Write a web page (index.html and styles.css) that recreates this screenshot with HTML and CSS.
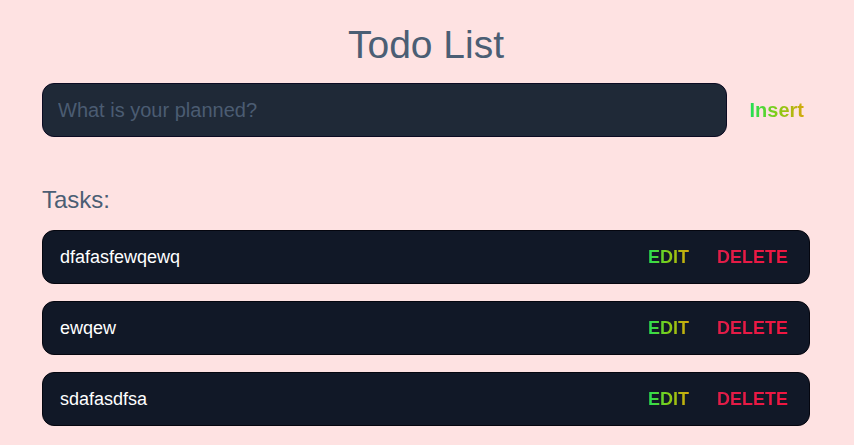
FILE: index.html
```html
<!DOCTYPE html>
<html lang="en">
<head>
<meta charset="utf-8">
<title>Todo List</title>
<link rel="stylesheet" href="styles.css">
</head>
<body>
<main class="app">
  <h1 class="title">Todo List</h1>
  <form class="entry" onsubmit="return false">
    <input class="entry-input" type="text" placeholder="What is your planned?">
    <button class="insert-btn" type="button"><span class="grad-green">Insert</span></button>
  </form>
  <h2 class="tasks-heading">Tasks:</h2>
  <ul class="tasks">
    <li class="task">
      <span class="task-text">dfafasfewqewq</span>
      <div class="task-actions">
        <button class="act-btn" type="button"><span class="grad-green">EDIT</span></button>
        <button class="act-btn" type="button"><span class="grad-red">DELETE</span></button>
      </div>
    </li>
    <li class="task">
      <span class="task-text">ewqew</span>
      <div class="task-actions">
        <button class="act-btn" type="button"><span class="grad-green">EDIT</span></button>
        <button class="act-btn" type="button"><span class="grad-red">DELETE</span></button>
      </div>
    </li>
    <li class="task">
      <span class="task-text">sdafasdfsa</span>
      <div class="task-actions">
        <button class="act-btn" type="button"><span class="grad-green">EDIT</span></button>
        <button class="act-btn" type="button"><span class="grad-red">DELETE</span></button>
      </div>
    </li>
  </ul>
</main>
</body>
</html>
```

FILE: styles.css
```css
* { box-sizing: border-box; }
html, body {
  margin: 0;
  padding: 0;
  background: #fee2e2;
  font-family: "Liberation Sans", Arial, sans-serif;
}
.app {
  width: 768px;
  margin-left: 42px;
  padding-top: 23px;
}
.title {
  margin: 0;
  font-size: 39px;
  font-weight: 400;
  color: #4b5e74;
  text-align: center;
  line-height: normal;
}
.entry {
  margin-top: 16px;
  display: flex;
  align-items: center;
  gap: 17px;
}
.entry-input {
  flex: 1;
  height: 54px;
  background: #1f2937;
  border: 1px solid #0b0b22;
  border-radius: 12px;
  padding: 0 15px;
  font-family: "Liberation Sans", Arial, sans-serif;
  font-size: 20px;
  color: #e5e7eb;
  outline: none;
}
.entry-input::placeholder { color: #4b5c72; }
.insert-btn {
  background: none;
  border: none;
  padding: 0 6px;
  font-family: "Liberation Sans", Arial, sans-serif;
  font-size: 20px;
  font-weight: 700;
  cursor: pointer;
}
.grad-green {
  background: linear-gradient(90deg, #22e055 0%, #84cc16 50%, #d4a80c 100%);
  -webkit-background-clip: text;
  background-clip: text;
  color: transparent;
}
.grad-red {
  background: linear-gradient(90deg, #e11d48 0%, #f01640 100%);
  -webkit-background-clip: text;
  background-clip: text;
  color: transparent;
}
.tasks-heading {
  margin: 49px 0 0;
  font-size: 24px;
  font-weight: 400;
  color: #4b5e74;
  line-height: normal;
}
.tasks {
  list-style: none;
  margin: 16px 0 0;
  padding: 0;
  display: flex;
  flex-direction: column;
  gap: 17px;
}
.task {
  height: 54px;
  display: flex;
  align-items: center;
  justify-content: space-between;
  background: #111827;
  border: 1px solid #05060f;
  border-radius: 12px;
  padding: 0 21px 0 17px;
}
.task-text {
  color: #ffffff;
  font-size: 18px;
}
.task-actions {
  display: flex;
  align-items: center;
  gap: 28px;
}
.act-btn {
  background: none;
  border: none;
  padding: 0;
  font-family: "Liberation Sans", Arial, sans-serif;
  font-size: 18px;
  font-weight: 700;
  cursor: pointer;
}
```
